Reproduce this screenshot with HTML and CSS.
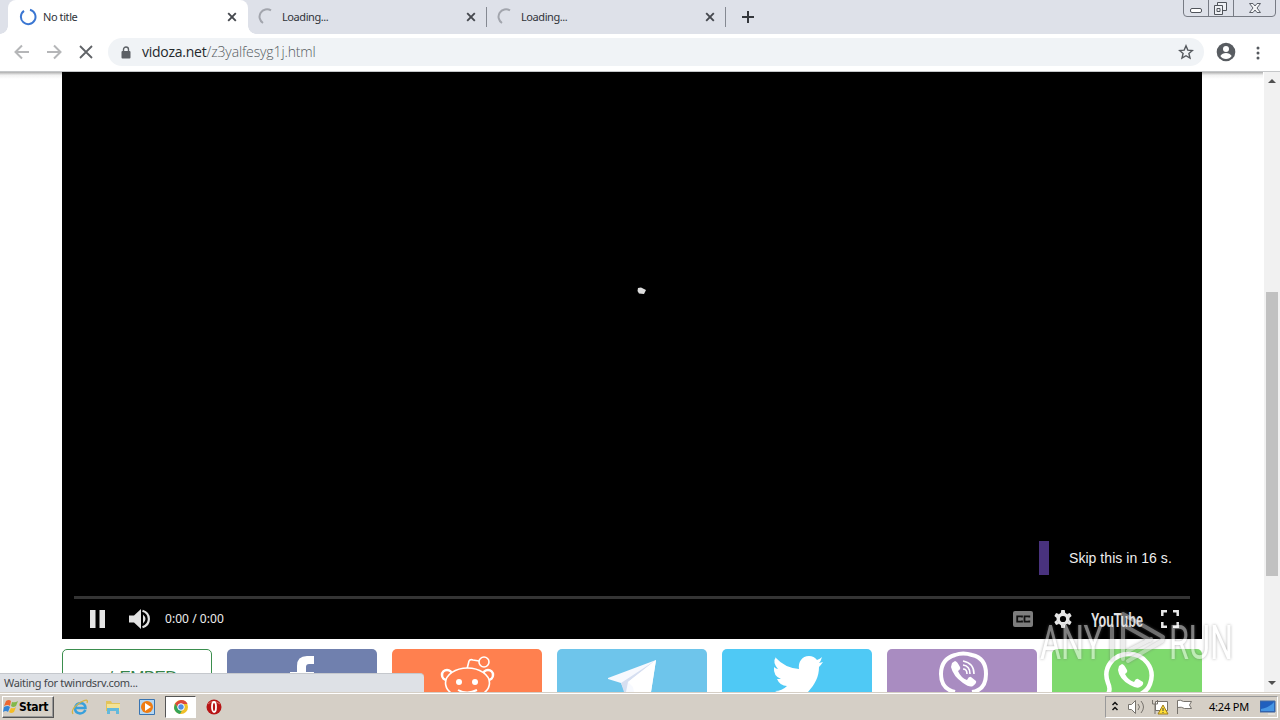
FILE: index.html
```html
<!DOCTYPE html>
<html lang="en"><head><meta charset="utf-8"><title>No title</title><link rel="stylesheet" href="styles.css"></head>
<body>
<div class="desktop">
<header class="tabs">
  <div class="tab active"><svg class="spin" width="18" height="18" viewBox="0 0 18 18"><path d="M11 1.800A7.300 7.300 0 1 1 5 2.900" fill="none" stroke="#3a76d2" stroke-width="2"/></svg><span>No title</span><svg class="close" width="10" height="10" viewBox="0 0 10 10"><path d="M1.200 1.200l7.600 7.600M8.800 1.200l-7.600 7.600"/></svg></div>
  <div class="tab"><svg class="spin" width="18" height="18" viewBox="0 0 18 18"><path d="M5 15A7 7 0 0 1 13 2.400" fill="none" stroke="#a2a5ad" stroke-width="2"/></svg><span>Loading...</span><svg class="close" width="10" height="10" viewBox="0 0 10 10"><path d="M1.200 1.200l7.600 7.600M8.800 1.200l-7.600 7.600"/></svg></div>
  <div class="tab"><svg class="spin" width="18" height="18" viewBox="0 0 18 18"><path d="M5 15A7 7 0 0 1 13 2.400" fill="none" stroke="#a2a5ad" stroke-width="2"/></svg><span>Loading...</span><svg class="close" width="10" height="10" viewBox="0 0 10 10"><path d="M1.200 1.200l7.600 7.600M8.800 1.200l-7.600 7.600"/></svg></div>
  <svg class="plus" width="12" height="12" viewBox="0 0 12 12"><path d="M6 0v12M0 6h12" stroke="#34373c" stroke-width="2"/></svg>
  <svg class="winbtns" width="94" height="18" viewBox="0 0 94 18"><g fill="none" stroke="#777b84"><path d="M.5 0v13q0 3.500 3.500 3.500h85q3.500 0 3.500-3.500V0M25.500 0v16M50.500 0v16"/><rect x="7.500" y="8.500" width="11" height="4" rx="1.500" fill="#fff" stroke="#50545b"/><g fill="#eef0f4" stroke="#50545b"><path d="M34.500 2.500h9v8h-9z"/><path d="M31.500 5.500h8v9h-8zM34 8.500h3v3h-3z"/></g><path d="M66.500 3.500h3.500l2 2.500 2-2.500h3.500L74 8l3.500 4.500H74L72 10l-2 2.500h-3.500L70 8z" fill="#f5f6f8" stroke="#5d6169"/></g></svg>
</header>
<nav class="toolbar">
  <svg width="100" height="36" viewBox="0 0 100 36"><g fill="none" stroke="#b5b6b8" stroke-width="2"><path d="M29 18H16M22 11.500L15.500 18l6.500 6.500M47 18h13M54 11.500l6.500 6.500-6.500 6.500"/><path d="M80 12l12 12M92 12L80 24" stroke="#606367" stroke-width="1.800"/></g></svg>
  <div class="omnibox"><svg class="lock" width="10" height="13" viewBox="0 0 10 13"><path d="M2.500 6V3.500a2.500 2.500 0 0 1 5 0V6" fill="none" stroke="#5c6065" stroke-width="1.400"/><rect x=".5" y="5" width="9" height="7.500" rx="1" fill="#5c6065"/></svg><span class="url"><b>vidoza.net</b>/z3yalfesyg1j.html</span><svg class="star" width="16" height="16" viewBox="0 0 16 16"><path d="M8 1.800l1.800 4.300 4.600.4-3.500 3 1.100 4.600L8 11.700l-4 2.400 1.100-4.600-3.500-3 4.600-.4z" fill="none" stroke="#55595e" stroke-width="1.400"/></svg></div>
  <svg class="user" width="20" height="20" viewBox="0 0 20 20"><circle cx="10" cy="10" r="9.300" fill="#585c61"/><circle cx="10" cy="7" r="3" fill="#fff"/><path d="M4.300 14q2-3 5.700-3t5.700 3Q13.700 17 10 17t-5.700-3z" fill="#fff"/></svg>
  <svg class="dots" width="4" height="14" viewBox="0 0 4 14"><g fill="#55595e"><circle cx="2" cy="2" r="1.500"/><circle cx="2" cy="7" r="1.500"/><circle cx="2" cy="12" r="1.500"/></g></svg>
</nav>
<main class="viewport">
  <div class="page">
    <section class="video">
      <svg class="speck" width="10" height="8" viewBox="0 0 10 8"><path d="M1 1l3-.5L9 3 7 7l-5-.5L.5 4z" fill="#ddd"/></svg>
      <div class="skip">Skip this in 16 s.</div>
      <div class="progress"></div>
      <div class="controls">
        <svg class="pause" width="16" height="18" viewBox="0 0 16 18"><path d="M0 0h5.500v18H0zM9.500 0H15v18H9.500z" fill="#e6e6e6"/></svg>
        <svg class="vol" width="21" height="20" viewBox="0 0 21 20"><path d="M0 6.500h5L12 0v20l-7-6.500H0zM14 5.500q5 4.500 0 9z" fill="#e2e2e2"/><path d="M13.500 1.800C22 4.500 22 15.500 13.500 18.200" fill="none" stroke="#e2e2e2" stroke-width="2.200"/></svg>
        <span class="time">0:00 / 0:00</span>
        <svg class="cc" width="20" height="16" viewBox="0 0 20 16"><rect width="20" height="16" rx="2" fill="#7d7d7d"/><path d="M9 6.500V5.300H4.200v5.400H9V9.500M16.300 6.500V5.300h-4.800v5.400h4.800V9.500" stroke="#111" stroke-width="1.800" fill="none"/></svg>
        <svg class="gear" width="18" height="18" viewBox="0 0 18 18"><g fill="#e7e7e7"><circle cx="9" cy="9" r="6.500"/><g id="t"><path d="M6.800 3L7.300 0h3.400l.5 3zM6.800 15l.5 3h3.400l.5-3z"/></g><use href="#t" transform="rotate(60 9 9)"/><use href="#t" transform="rotate(-60 9 9)"/></g><circle cx="9" cy="9" r="3.100" fill="#000"/></svg>
        <svg class="yt" width="54" height="28" viewBox="0 0 54 28"><text x="0" y="21.500" textLength="52" lengthAdjust="spacingAndGlyphs">YouTube</text></svg>
        <svg class="full" width="18" height="18" viewBox="0 0 18 18"><path d="M6 1.300H1.300V6M12 1.300h4.700V6M1.300 12v4.700H6M16.700 12v4.700H12" fill="none" stroke="#e8e8e8" stroke-width="2.500"/></svg>
      </div>
    </section>
    <section class="cards">
      <div class="card embed">/ EMBED</div>
      <div class="card fb"><svg width="150" height="43"><path d="M87 7h-7q-10 0-10 10v6h-7v9h7v12h9V32h7l1-9h-8v-5q0-3 3-3h5z" fill="#fff"/></svg></div>
      <div class="card reddit"><svg width="150" height="43"><g fill="none" stroke="#fff" stroke-width="1.600"><circle cx="92" cy="13" r="5"/><path d="M75 20l2-8q1-2 4-1l6 1"/><circle cx="55" cy="26" r="5" stroke-width="2.500"/><circle cx="96" cy="26" r="5" stroke-width="2.500"/><ellipse cx="75.500" cy="34" rx="22" ry="15" fill="#ff804f"/><path d="M66 41q9 5 19 0" stroke-width="2"/></g><circle cx="67" cy="33" r="3" fill="#fff"/><circle cx="83" cy="33" r="3" fill="#fff"/></svg></div>
      <div class="card tg"><svg width="150" height="43"><path d="M99 11L51 29v1l13 4 4 9h26z" fill="#f7f9fe"/><path d="M99 11L64 34l3 9h2l2-10z" fill="#d6dff1"/><path d="M99 11L71 33l5 5 1 5h17z" fill="#fff"/></svg></div>
      <div class="card tw"><svg width="150" height="43"><path d="M54 9q9 10 23 11C76 13 80 7 87 7q5 0 8 4 3-1 5-3-1 4-3 6l4-1q-2 3-4 5c0 10-4 17-11 25H58q-4 0-5-1 7 0 12-5-7 0-10-7h4q-8-3-7-12 2 2 4 2-6-7-2-12z" fill="#fff"/></svg></div>
      <div class="card viber"><svg width="150" height="43"><path d="M68 43Q54 40 54 25T68 6q8-3 17 0 14 3 14 19T85 43" fill="none" stroke="#fff" stroke-width="4"/><path d="M65 14l3-2q2 0 5 6 1 2-2 4 3 7 9 9 2-4 4-3l5 4q1 2-3 5-3 2-10-3-10-7-12-16z" fill="#fff"/><path d="M76 12q11 2 11 13M76 16q7 1 7 9M76 20q4 0 4 5" fill="none" stroke="#fff" stroke-width="1.600"/></svg></div>
      <div class="card wa"><svg width="150" height="43"><path d="M56 45q3-5 0-11C50 18 62 5 77 5s27 14 21 30q-2 6-9 10" fill="none" stroke="#fff" stroke-width="4.500"/><path d="M67 17l3-2q2 0 5 6 1 2-2 4 3 6 9 8 2-4 4-3l5 3q1 3-3 5-3 2-10-2-11-6-12-15z" fill="#fff"/></svg></div>
    </section>
  </div>
  <aside class="scrollbar"><i class="up"></i><div class="thumb"></div><i class="down"></i></aside>
  <div class="status">Waiting for twinrdsrv.com...</div>
</main>
<footer class="taskbar">
  <div class="start"><svg width="16" height="16" viewBox="0 0 16 16"><path d="M3 2q3-2 5 0L7 7Q5 5 1 7z" fill="#ee6731"/><path d="M9 3q3 1 6-1l-2 5q-3 2-5 0z" fill="#83b84b"/><path d="M1 8q4-2 6 0l-2 5q-2-2-5 0z" fill="#3484d6"/><path d="M8 9q3 1 5-1l-2 5q-3 2-5 0z" fill="#f5bd26"/></svg><b>Start</b></div>
  <div class="apps">
    <svg class="app" width="18" height="18" viewBox="0 0 18 18"><path d="M14.500 12q-2 3.500-5.500 3.500-5-.5-5-5.500 1-5 6-5 4.500 1 4.500 5H5" fill="none" stroke="#38a0dc" stroke-width="2.500"/><path d="M2 16q-3-5 8-12 8-4 6 1" fill="none" stroke="#d6b444" stroke-width="1.300"/></svg>
    <svg class="app" width="18" height="18" viewBox="0 0 18 18"><path d="M2 3h5l1 2h8v8H2z" fill="#e3c45b"/><path d="M3 6h13v7H3z" fill="#f4e294"/><path d="M3 16v-6h12v6h-3v-3H6v3z" fill="#63b9dc"/></svg>
    <svg class="app" width="18" height="18" viewBox="0 0 18 18"><path d="M1.500 1.500h15v15h-15z" fill="#b5d7f2" stroke="#3974b1"/><circle cx="9" cy="9" r="6" fill="#ef7c12"/><path d="M7 5l6 4-6 4z" fill="#fff"/></svg>
    <div class="chrome"><svg width="16" height="16" viewBox="0 0 16 16"><circle cx="8" cy="8" r="7" fill="#f0bf28"/><path d="M2 4.500Q5 1 8 1q5 0 6.500 4H8L5 9z" fill="#dc483b"/><path d="M2 4.500l4 6 3 1L7 15Q2 14 1 9z" fill="#35a457"/><circle cx="8" cy="8" r="3.300" fill="#4f8ee4" stroke="#fff"/></svg></div>
    <svg class="opera" width="16" height="16" viewBox="0 0 16 16"><circle cx="8" cy="8" r="7.500" fill="#b71415"/><path d="M2 5q5-5 12 0" stroke="#db6b64" fill="none"/><ellipse cx="8" cy="8" rx="2" ry="5" fill="none" stroke="#fff" stroke-width="1.800"/></svg>
  </div>
  <div class="tray">
    <svg width="88" height="20" viewBox="0 0 88 20"><path d="M6.500 8L9 5.500 11.500 8M6.500 13L9 10.500l2.500 2.500" fill="none" stroke="#111" stroke-width="1.500"/><g stroke="#77736d" fill="#fff"><path d="M22.500 7.500h3l4-4v13l-4-4h-3zM49.500 4.500h12v9h-12zM71.500 17V3.500q3-1 6 1h8l-2 3.500 2 3.500h-7q-3-2-7-1"/><path d="M46.500 3v4h5V3M49 7v10" fill="none"/><path d="M32 7q3 3 0 6M35 4q5 6 0 12" fill="none"/></g><path d="M57 8l5 9H52z" fill="#ffdf37" stroke="#a17d18"/><path d="M57 11v3M57 15v1" stroke="#444"/></svg>
    <span>4:24 PM</span><svg class="screen" width="16" height="16" viewBox="0 0 16 16"><path d="M0 1h15v11H0z" fill="#205fbe" stroke="#456aa0"/><path d="M1 9Q9 8 14 2v9H1z" fill="#4796e4"/><path d="M8 14h7" stroke="#eee"/></svg>
  </div>
</footer>
<svg class="watermark" width="204" height="70" viewBox="0 0 204 70"><g fill="#fff"><text x="3" y="51" textLength="63" lengthAdjust="spacingAndGlyphs">ANY</text><text x="132" y="51" textLength="64" lengthAdjust="spacingAndGlyphs">RUN</text></g><path d="M75 18v33M86 51V6l40 23-1 4-34 20M88 18l25 14M91 43l23-12" fill="none" stroke="#ddd" stroke-width="4" stroke-linejoin="round" stroke-linecap="round"/></svg>
</div>
</body></html>
```
FILE: styles.css
```css
* { box-sizing: border-box; }
body { margin: 0; font-family: "Liberation Sans", sans-serif; overflow: hidden; }
svg { display: block; flex: none; }
.desktop { width: 1280px; height: 720px; display: flex; flex-direction: column; position: relative; overflow: hidden; }
.tabs { height: 34px; flex: none; background: #dee1e9; display: flex; padding-left: 8px; }
.tab { width: 239px; height: 34px; display: flex; align-items: center; padding: 0 11px 0 10px; font: 11px "Noto Sans", sans-serif; letter-spacing: -.42px; color: #303339; position: relative; }
.tab span { margin: -2px 0 0 6px; flex: 1; }
.tab.active { width: 240px; background: #fff; border-radius: 8px 8px 0 0; padding-left: 11px; padding-right: 11px; }
.tab:not(.active)::after { content: ""; position: absolute; right: 0; top: 7px; height: 20px; border-right: 1px solid #858992; }
.active::before, .active::after { content: ""; position: absolute; bottom: 0; width: 8px; height: 8px; }
.active::before { left: -8px; background: radial-gradient(circle at 0 0, transparent 7.5px, #fff 8px); }
.active::after { right: -8px; background: radial-gradient(circle at 100% 0, transparent 7.5px, #fff 8px); }
.close { stroke: #45484e; stroke-width: 1.9; }
.plus { margin: 11px 0 0 16px; }
.winbtns { margin: 0 3px 0 auto; }
.toolbar { height: 38px; flex: none; background: #fff; display: flex; border-bottom: 1px solid #c5c7c9; position: relative; z-index: 2; }
.toolbar::after { content: ""; position: absolute; left: 0; top: 38px; width: 1263px; height: 7px; background: linear-gradient(#999c, #ddd6 45%, transparent); z-index: -1; }
.omnibox { margin: 4px 0 0 8px; width: 1096px; height: 28px; border-radius: 14px; background: #f0f3f6; display: flex; align-items: center; padding: 0 10px 0 13px; }
.url { margin: -2px 0 0 11px; flex: 1; font: 14px "Open Sans", sans-serif; font-weight: 300; color: #565b60; letter-spacing: -.12px; white-space: nowrap; }
.url b { font-weight: 400; color: #24282c; letter-spacing: -.25px; }
.user { margin: 8px 0 0 12px; }
.dots { margin: 12px 0 0 20px; }
.viewport { height: 620px; flex: none; display: flex; position: relative; background: #fff; }
.page { width: 1264px; padding-left: 62px; overflow: hidden; }
.video { height: 567px; width: 1140px; background: #000; color: #eee; position: relative; z-index: 3; display: flex; flex-direction: column; }
.speck { margin: 215px 0 0 575px; }
.skip { margin: 246px 0 0 977px; width: 150px; height: 34px; border-left: 10px solid #49327e; padding-left: 20px; font-size: 14px; line-height: 35px; letter-spacing: .05px; white-space: nowrap; }
.progress { margin: 21px 12px 0; height: 3px; background: #343434; }
.controls { display: flex; align-items: center; height: 40px; padding-left: 28px; }
.vol { margin-left: 23px; }
.time { margin: -2px 0 0 15px; font: 12px "Noto Sans", sans-serif; letter-spacing: .05px; }
.cc { margin-left: auto; }
.gear { margin-left: 21px; }
.yt { margin-left: 19px; font: bold 21px "Liberation Sans", sans-serif; fill: #e3e3e3; }
.full { margin: 0 23px 0 16px; }
.cards { display: flex; gap: 15px; margin-top: 10px; }
.card { width: 150px; height: 70px; border-radius: 5px 5px 0 0; }
.embed { border: 1px solid #3b8e4e; color: #37844a; font: 17px/56px "Liberation Sans", sans-serif; text-align: right; padding-right: 34px; white-space: nowrap; letter-spacing: -.6px; word-spacing: 3px; }
.fb { background: #7080ae; } .reddit { background: #ff804f; } .tg { background: #6ec5eb; } .tw { background: #4fc9f5; } .viber { background: #a98cc1; } .wa { background: #7ed96d; }
.scrollbar { width: 16px; background: #f1f1f1; display: flex; flex-direction: column; align-items: center; }
.up, .down { border: 4px solid transparent; border-top: 0; border-bottom-color: #505050; margin-top: 7px; }
.down { border-bottom: 0; border-top: 4px solid #505050; margin: auto 0 7px; }
.thumb { width: 12px; height: 284px; margin-top: 209px; background: #c1c1c1; }
.status { position: absolute; left: 0; bottom: 0; width: 424px; height: 19px; border-radius: 0 4px 0 0; background: #dee1e6; border-top: 1px solid #c5c8cd; padding-left: 4px; color: #44474b; font: 11px/17px "Noto Sans", sans-serif; letter-spacing: -.31px; z-index: 4; }
.taskbar { height: 28px; background: #d5cfc6; border-top: 1px solid #d5cfc6; box-shadow: inset 0 1px #fff; display: flex; align-items: center; padding: 1px 2px 0; }
.start { width: 52px; height: 22px; display: flex; align-items: center; border: 1px solid; border-color: #fff #555 #555 #fff; box-shadow: inset -1px -1px #999; background: #d5cfc6; font: bold 12px "DejaVu Sans Condensed", "DejaVu Sans", sans-serif; letter-spacing: -.3px; }
.apps { display: flex; align-items: center; margin-left: 17px; }
.app { margin-right: 15px; }
.apps .app:nth-child(3) { margin: 0 9px 0 1px; }
.chrome { width: 31px; height: 22px; background: #fff; border: 1px solid; border-color: #555 #fff #fff #555; display: grid; place-items: center; margin-right: 10px; }
.tray { margin-left: auto; width: 173px; height: 22px; border: 1px solid; border-color: #999 #fff #fff #999; display: flex; align-items: center; font: 11px "Noto Sans", sans-serif; letter-spacing: -.2px; }
.tray span { margin: -2px 0 0 15px; white-space: nowrap; }
.screen { margin: 2px 1px 0 auto; }
.watermark { position: absolute; left: 1037px; top: 608px; z-index: 8; opacity: .5; font: 400 49px Roboto, sans-serif; filter: drop-shadow(0 0 1.5px #666); }
```
